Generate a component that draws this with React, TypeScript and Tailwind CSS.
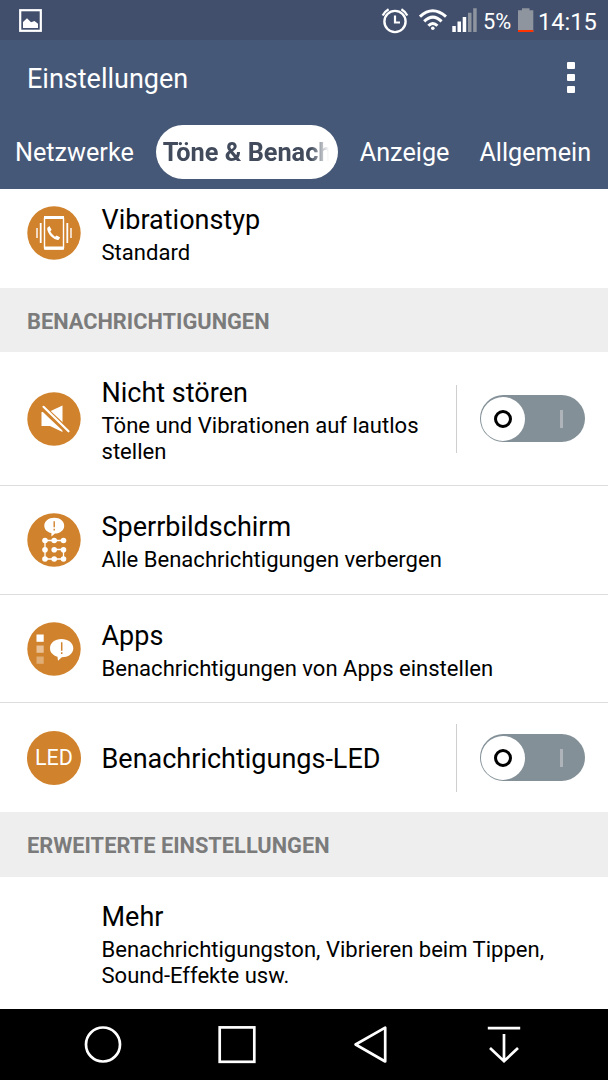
import { useState } from 'react'
import type { ReactNode } from 'react'

const tabs = [
    { label: 'Netzwerke', gap: '' },
    { label: 'Töne & Benach', gap: 'ml-[22px]' },
    { label: 'Anzeige', gap: 'ml-[21.5px]' },
    { label: 'Allgemein', gap: 'ml-[30px]' },
]

function StatusBar() {
    return (
        <div className="h-[40px] shrink-0 bg-[#414f6c] flex items-center text-white">
            <svg className="ml-[19px]" width="23" height="23" viewBox="0 0 23 23">
                <rect x="1.2" y="1.2" width="20.6" height="20.6" fill="none" stroke="white" strokeWidth="2.2" />
                <path d="M4 19V13L8 9.3L12 13.3L15.5 12L19 14.8V19Z" fill="white" />
            </svg>
            <svg className="ml-[339px]" width="29" height="30" viewBox="0 0 29 30" fill="none" stroke="white">
                <circle cx="14" cy="16.5" r="10.6" strokeWidth="2.4" />
                <path d="M14 10.5V17.5H19" strokeWidth="2.2" />
                <path d="M1.7 10.5A15 15 0 0 1 7.6 4.2M20.4 4.2A15 15 0 0 1 26.3 10.5" strokeWidth="2.4" />
            </svg>
            <svg className="ml-[9px]" width="28" height="24" viewBox="0 0 28 24" fill="none" stroke="white" strokeWidth="3">
                <path d="M1 8.7Q13.6 -3.2 27 8.7" />
                <path d="M5.2 13.4Q13.8 4.8 22.6 13.4" />
                <path d="M9.4 17.8Q13.8 13.2 18.4 17.8" />
                <circle cx="13.8" cy="20.2" r="1.8" fill="white" stroke="none" />
            </svg>
            <svg className="ml-[5px]" width="25" height="24" viewBox="0 0 25 24" fill="white">
                <path d="M.3 18H3.8V24H.3zM5.5 13.5H9V24H5.5zM10.7 9H14.2V24H10.7z" />
                <path d="M16 4.7H19.5V24H16zM21.2.3H24.7V24H21.2z" fill="#8e959e" />
            </svg>
            <span className="ml-[6px] w-[35px] text-[21.8px] leading-[26px] mt-[3px] whitespace-nowrap">5%</span>
            <svg width="16" height="24" viewBox="0 0 16 24">
                <path d="M0 2.3H4V.3H11.5V2.3H15.3V24H0z" fill="#8e959e" />
                <path d="M0 22H15.3V24H0z" fill="#ff3300" />
            </svg>
            <span className="ml-[4px] text-[23.6px] leading-[28px] mt-[3px] whitespace-nowrap">14:15</span>
        </div>
    )
}

function VibrationIcon() {
    return (
        <g stroke="white" fill="none">
            <rect x="17.5" y="11" width="19" height="32" rx="1" strokeWidth="1.4" />
            <path d="M17 11.5H37M17 42H37" strokeWidth="3" />
            <path d="M10 22V32M44 22V32" strokeWidth="1.4" />
            <path d="M13.7 17V37M40.3 17V37" strokeWidth="1.8" />
            <path
                d="M20.2 22.1L22.4 20L24.6 23.8L23.3 25.5Q25 28.8 28 30.7L29.7 29.4L33.2 31.6L31.4 34Q28.5 34.5 24.5 30.8Q20 26.5 20.2 22.1Z"
                fill="white"
                stroke="none"
            />
        </g>
    )
}

function MuteIcon() {
    return (
        <g>
            <path d="M14.5 20H21.5L35.5 13.5V40L23 34H14.5Z" fill="white" />
            <path d="M15 15L41.5 40" stroke="#d0822c" strokeWidth="6" />
            <path d="M16.5 14.8L41.5 39.3" stroke="white" strokeWidth="2.2" strokeLinecap="round" />
        </g>
    )
}

function LockIcon() {
    return (
        <g fill="white">
            <path d="M27.3 4.7C33 4.7 37.2 8 37.2 12.7C37.2 17.3 33 20.4 28 20.6L24.4 23.6V20.1C20 19 17.3 16.3 17.3 12.7C17.3 8 21.6 4.7 27.3 4.7Z" />
            <path d="M27.2 8.3V14.2M27.2 15.8V17.4" stroke="#d0822c" strokeWidth="1.4" />
            <path d="M36.5 27.5H18V46H36.5V36.5H27.3" fill="none" stroke="white" strokeWidth="1.3" />
            {[27.5, 36.7, 46].map((y) =>
                [18, 27.2, 36.5].map((x) => <circle key={`${x}-${y}`} cx={x} cy={y} r="2.8" />)
            )}
        </g>
    )
}

function AppsIcon() {
    return (
        <g fill="white">
            <rect x="9.5" y="12.5" width="7.2" height="7.3" />
            <rect x="9.5" y="23.5" width="7.2" height="7.3" opacity=".5" />
            <rect x="9.5" y="34.5" width="7.2" height="7.3" opacity=".35" />
            <path d="M34.5 17C41 17 46.3 20.8 46.3 26.3C46.3 32 41 35.3 34.8 35.3L31 38.8L30.5 34.8C26 33.5 23 30.5 23 26.3C23 20.8 28 17 34.5 17Z" />
            <path d="M34.7 20.3V28.8M34.7 30.2V32" stroke="#d0822c" strokeWidth="1.5" />
        </g>
    )
}

function Badge({ children }: { children?: ReactNode }) {
    return (
        <svg width="54" height="54" viewBox="0 0 54 54" className="shrink-0">
            <circle cx="27" cy="27" r="26.7" fill="#d0822c" />
            {children}
        </svg>
    )
}

function Toggle() {
    const [on, setOn] = useState(false)

    return (
        <div className="flex items-center ml-auto mr-[23px] shrink-0">
            <div className="w-px h-[68px] bg-[#cfcfcf] mr-[23px]" />
            <button
                role="switch"
                aria-checked={on}
                onClick={() => setOn(!on)}
                className={`w-[105px] h-[47px] rounded-full bg-[#839097] px-px flex items-center ${on ? 'flex-row-reverse' : ''}`}
            >
                <span className="size-[44px] rounded-full bg-white flex items-center justify-center">
                    <span className="size-[18px] rounded-full border-[3px] border-black" />
                </span>
                <span className="flex-1 flex justify-center pl-[14px]">
                    <span className="w-[3px] h-[18px] bg-[#aeb4b9]" />
                </span>
            </button>
        </div>
    )
}

interface RowProps {
    title: string
    text?: string
    icon?: ReactNode
    toggle?: boolean
    className: string
}

function Row({ title, text, icon, toggle, className }: RowProps) {
    return (
        <div className={`flex items-center shrink-0 pl-[27px] ${className}`}>
            <div className="w-[54px] shrink-0">{icon}</div>
            <div className="ml-[20.5px] flex flex-col pt-[3px]">
                <div className="text-[27px] leading-[34px] whitespace-nowrap">{title}</div>
                {text && <div className="mt-[3px] text-[22.05px] leading-[26px] whitespace-pre">{text}</div>}
            </div>
            {toggle && <Toggle />}
        </div>
    )
}

function Section({ children, className }: { children: ReactNode; className: string }) {
    return (
        <div className={`bg-[#eeeeee] text-[#7b7b7b] font-bold text-[21.8px] pl-[27px] pt-[4px] shrink-0 flex items-center ${className}`}>
            {children}
        </div>
    )
}

export default function App() {
    const [active, setActive] = useState(1)

    return (
        <div className="w-[608px] h-[1080px] flex flex-col bg-white text-black overflow-hidden font-[Roboto,sans-serif]">
            <StatusBar />

            <header className="h-[149px] shrink-0 bg-[#465877] text-white flex flex-col">
                <div className="h-[77px] flex items-center justify-between pl-[27px] pr-[33.5px]">
                    <h1 className="text-[27px] pt-[2px]">Einstellungen</h1>
                    <div className="flex flex-col gap-[4.5px] -mt-[2px]">
                        <span className="size-[7.6px] bg-white rounded-[1px]" />
                        <span className="size-[7.6px] bg-white rounded-[1px]" />
                        <span className="size-[7.6px] bg-white rounded-[1px]" />
                    </div>
                </div>
                <nav className="flex items-center h-[70px] pl-[15px]">
                    {tabs.map(({ label, gap }, i) => (
                        <button
                            key={label}
                            onClick={() => setActive(i)}
                            className={`shrink-0 whitespace-nowrap ${gap} ${
                                i === active
                                    ? 'w-[182.5px] h-[54px] rounded-full bg-white text-[#414b5c] font-bold text-[25.3px] pl-[7px] text-left'
                                    : 'text-[25.2px] pt-[2px]'
                            }`}
                        >
                            <span
                                className={
                                    i === active
                                        ? 'inline-block pt-[2px] w-[166px] overflow-hidden align-middle [mask-image:linear-gradient(to_right,black_89%,transparent)]'
                                        : ''
                                }
                            >
                                {label}
                            </span>
                        </button>
                    ))}
                </nav>
            </header>

            <main className="flex flex-col shrink-0">
                <Row className="h-[99px] pb-[11.5px]" title="Vibrationstyp" text="Standard" icon={<Badge><VibrationIcon /></Badge>} />
                <Section className="h-[64px]">BENACHRICHTIGUNGEN</Section>
                <Row
                    className="h-[134px] border-b border-[#dedede]"
                    title="Nicht stören"
                    text={'Töne und Vibrationen auf lautlos\nstellen'}
                    icon={<Badge><MuteIcon /></Badge>}
                    toggle
                />
                <Row
                    className="h-[109px] border-b border-[#dedede]"
                    title="Sperrbildschirm"
                    text="Alle Benachrichtigungen verbergen"
                    icon={<Badge><LockIcon /></Badge>}
                />
                <Row
                    className="h-[108px] border-b border-[#dedede]"
                    title="Apps"
                    text="Benachrichtigungen von Apps einstellen"
                    icon={<Badge><AppsIcon /></Badge>}
                />
                <Row
                    className="h-[109px]"
                    title="Benachrichtigungs-LED"
                    icon={
                        <div className="size-[54px] rounded-full bg-[#d0822c] text-white text-[21.5px] pt-px flex items-center justify-center">
                            LED
                        </div>
                    }
                    toggle
                />
                <Section className="h-[65px]">ERWEITERTE EINSTELLUNGEN</Section>
                <Row
                    className="h-[132px]"
                    title="Mehr"
                    text={'Benachrichtigungston, Vibrieren beim Tippen,\nSound-Effekte usw.'}
                />
            </main>

            <footer className="h-[71px] shrink-0 bg-black flex items-center pl-[84px]">
                <svg width="38" height="38" viewBox="0 0 38 38" fill="none" stroke="white" strokeWidth="2.7">
                    <circle cx="19" cy="18.5" r="17" />
                </svg>
                <svg className="ml-[96px]" width="38" height="38" viewBox="0 0 38 38" fill="none" stroke="white" strokeWidth="2.7">
                    <rect x="1.7" y="1.4" width="34.6" height="34.4" />
                </svg>
                <svg className="ml-[97px]" width="36" height="38" viewBox="0 0 36 38" fill="none" stroke="white" strokeWidth="2.7" strokeLinejoin="round">
                    <path d="M32.2 1.7V35.5L2.6 18.5Z" />
                </svg>
                <svg className="ml-[98px]" width="34" height="38" viewBox="0 0 34 38" fill="none" stroke="white" strokeWidth="2.7">
                    <path d="M.8 2.2H33.2M17 8V35M3 22L17 35.2L31 22" />
                </svg>
            </footer>
        </div>
    )
}
